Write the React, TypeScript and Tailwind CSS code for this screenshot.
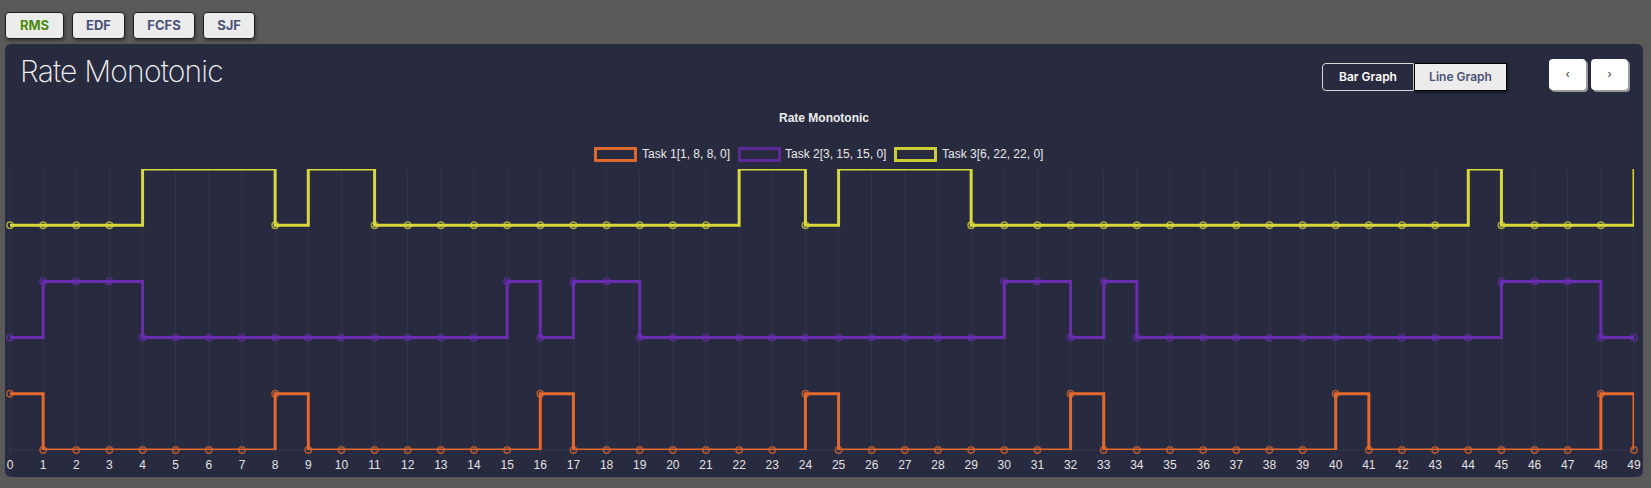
import React from 'react';

const N = 50;
const X0 = 5;
const DX = (1629 - 5) / 49;
const yOf = (v: number) => 346 - 56.2 * v;

const tasks = [
  {
    name: 'Task 1[1, 8, 8, 0]',
    color: '#e4692c',
    box: '#dc682c',
    hi: [0, 8, 16, 24, 32, 40, 48],
    lo: 0,
    bx: 590.5,
    tx: 637,
  },
  {
    name: 'Task 2[3, 15, 15, 0]',
    color: '#6a2db0',
    box: '#5d2997',
    hi: [1, 2, 3, 15, 17, 18, 30, 31, 33, 45, 46, 47],
    lo: 2,
    bx: 734.5,
    tx: 780,
  },
  {
    name: 'Task 3[6, 22, 22, 0]',
    color: '#d8d83a',
    box: '#cccc34',
    hi: [4, 5, 6, 7, 9, 10, 22, 23, 25, 26, 27, 28, 44, 49],
    lo: 4,
    bx: 890.5,
    tx: 937,
  },
];

function values(t: (typeof tasks)[number]) {
  return Array.from({ length: N }, (_, i) => (t.hi.includes(i) ? t.lo + 1 : t.lo));
}

function stepPath(vals: number[]) {
  let d = `M${X0},${yOf(vals[0])}`;
  for (let i = 1; i < vals.length; i++) {
    d += ` H${X0 + i * DX} V${yOf(vals[i])}`;
  }
  return d;
}

function Chart() {
  return (
    <svg width={1638} height={373} className="block" style={{ fontFamily: '"Liberation Sans", Arial, sans-serif' }}>
      <defs>
        <clipPath id="area">
          <rect x={X0} y={65} width={1624} height={281} />
        </clipPath>
      </defs>
      <text x={819} y={15} textAnchor="middle" dominantBaseline="middle" fontSize={12} fontWeight="bold" fill="#ececec">
        Rate Monotonic
      </text>
      {tasks.map((t) => (
        <g key={t.name}>
          <rect x={t.bx} y={44.5} width={40} height={12} fill="#282a40" stroke={t.box} strokeWidth={3} />
          <text x={t.tx} y={51} dominantBaseline="middle" fontSize={12} fill="#e8e8e8">
            {t.name}
          </text>
        </g>
      ))}
      {Array.from({ length: N }, (_, i) => (
        <line key={i} x1={X0 + i * DX} x2={X0 + i * DX} y1={65} y2={352} stroke="#ffffff" strokeOpacity={0.05} />
      ))}
      <line x1={X0} x2={1629} y1={346} y2={346} stroke="#ffffff" strokeOpacity={0.05} />
      {tasks.map((t) => {
        const vals = values(t);
        return (
          <g key={t.name + 'l'}>
            <path d={stepPath(vals)} fill="none" stroke={t.color} strokeWidth={3} clipPath="url(#area)" />
            {vals.map((v, i) =>
              v === 5 ? null : (
                <circle key={i} cx={X0 + i * DX} cy={yOf(v)} r={3.2} fill="none" stroke={t.color} strokeOpacity={0.7} strokeWidth={1.5} />
              ),
            )}
          </g>
        );
      })}
      {Array.from({ length: N }, (_, i) => (
        <text key={i} x={X0 + i * DX} y={362} textAnchor="middle" dominantBaseline="middle" fontSize={12} fill="#e2e2e2">
          {i}
        </text>
      ))}
    </svg>
  );
}

const algos = [
  { label: 'RMS', w: 'w-[59px]', active: true },
  { label: 'EDF', w: 'w-[53px]' },
  { label: 'FCFS', w: 'w-[62px]' },
  { label: 'SJF', w: 'w-[52px]' },
];

export default function App() {
  return (
    <div className="w-[1651px] h-[488px] bg-[#595959] overflow-hidden font-['Inter',sans-serif]">
      <div className="flex gap-2 pl-[5px] pt-[12px]">
        {algos.map((a) => (
          <button
            key={a.label}
            className={`${a.w} h-[27px] rounded-[4px] border border-[#1c1c1c] bg-[#ececec] text-[13px] font-bold shadow-[1px_2px_3px_rgba(0,0,0,0.35)] ${
              a.active ? 'text-[#4a8a10]' : 'text-[#4b5278]'
            }`}
          >
            {a.label}
          </button>
        ))}
      </div>
      <div className="mt-[5px] ml-[5px] w-[1638px] h-[433px] rounded-md bg-[#282a40] overflow-hidden">
        <div className="flex items-start h-[60px] px-[15px]">
          <h1 className="mt-[9px] text-[30px] leading-[36px] font-extralight tracking-[-0.8px] text-[#f2f2f2]">Rate Monotonic</h1>
          <div className="ml-auto flex mt-[19px]">
            <button className="w-[92px] h-[28px] rounded-l-[4px] border border-[#d8d8d8] bg-[#282a40] text-[12px] font-semibold text-white">
              Bar Graph
            </button>
            <button className="w-[93px] h-[28px] border border-black bg-[#ececec] text-[12px] font-semibold text-[#4b5278] shadow-[1px_1px_3px_rgba(0,0,0,0.6)]">
              Line Graph
            </button>
          </div>
          <div className="flex gap-[5px] ml-[42px] mt-[15px]">
            <button className="w-[37px] h-[31px] rounded-[4px] bg-white text-[11px] text-[#333] shadow-[2px_2px_0_#9a9a9a]">‹</button>
            <button className="w-[37px] h-[31px] rounded-[4px] bg-white text-[11px] text-[#333] shadow-[2px_2px_0_#9a9a9a]">›</button>
          </div>
        </div>
        <Chart />
      </div>
    </div>
  );
}
